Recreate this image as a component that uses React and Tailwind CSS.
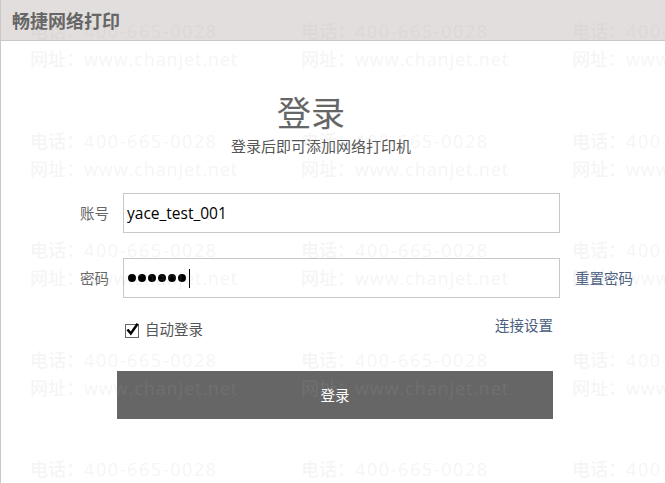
import React, { useState } from "react";

const Watermark = () => {
    const rows = [0, 1, 2, 3, 4];
    const cols = [0, 1, 2];
    return (
        <div className="col-start-1 row-start-1 pointer-events-none select-none overflow-hidden pl-[30px] pt-[17px]">
            {rows.map((r) => (
                <div key={r} className="flex h-[109.5px]">
                    {cols.map((c) => (
                        <div
                            key={c}
                            className="w-[271px] shrink-0 text-[18px] font-medium leading-[28px] whitespace-nowrap text-[rgba(175,175,175,0.15)] font-['Open_Sans','Noto_Sans_CJK_SC',sans-serif]"
                        >
                            <div>
                                电话：<span className="tracking-[1.6px]">400-665-0028</span>
                            </div>
                            <div>
                                网址：<span className="tracking-[0.9px]">www.chanjet.net</span>
                            </div>
                        </div>
                    ))}
                </div>
            ))}
        </div>
    );
};

const App = () => {
    const [account, setAccount] = useState("yace_test_001");
    const [password] = useState("123456");
    const [autoLogin, setAutoLogin] = useState(true);

    return (
        <div className="grid h-[483px] w-[665px] overflow-hidden bg-white font-['Noto_Sans_CJK_SC','Noto_Sans',sans-serif]">
            <div className="col-start-1 row-start-1 flex flex-col border-l border-[#c9c9c9]">
                <div className="flex h-[41px] shrink-0 items-center border-b border-[#c8c8c8] bg-[#e2dedd] pl-[11px]">
                    <span className="text-[18px] font-bold leading-none text-[#666]">畅捷网络打印</span>
                </div>

                <div className="flex flex-col">
                    <h1 className="mt-[54px] pl-[276px] text-[34px] leading-none text-[#666]">登录</h1>
                    <p className="mt-[9px] pl-[230px] text-[15px] leading-none text-[#555]">登录后即可添加网络打印机</p>

                    <div className="mt-[40px] flex flex-col pl-[79px]">
                        <div className="flex items-center">
                            <label className="w-[43px] text-[14.5px] text-[#666]">账号</label>
                            <input
                                value={account}
                                onChange={(e) => setAccount(e.target.value)}
                                className="h-[40px] w-[437px] border border-[#c8c8c8] px-[3px] text-[15.5px] text-black outline-none font-['Open_Sans',sans-serif]"
                            />
                        </div>

                        <div className="mt-[25px] flex items-center">
                            <label className="w-[43px] text-[14.5px] text-[#666]">密码</label>
                            <div className="flex h-[40px] w-[437px] items-center gap-[2px] border border-[#c8c8c8] pl-[4px]">
                                {password.split("").map((_, i) => (
                                    <span key={i} className="h-[8px] w-[8px] rounded-full bg-black" />
                                ))}
                                <span className="ml-[1px] h-[19px] w-px bg-black" />
                            </div>
                            <a className="ml-[15px] cursor-pointer text-[14.5px] text-[#4b5e7e]">重置密码</a>
                        </div>

                        <div className="mt-[16px] ml-[45px] flex w-[428px] items-start justify-between">
                            <label
                                className="mt-[4px] flex cursor-pointer items-center gap-[6px]"
                                onClick={() => setAutoLogin(!autoLogin)}
                            >
                                <span className="relative mt-[4px] h-[14px] w-[14px] border border-[#666] bg-white">
                                    {autoLogin && (
                                        <svg
                                            viewBox="0 0 16 16"
                                            className="absolute left-[0px] top-[-3px] h-[15px] w-[14px]"
                                        >
                                            <path
                                                d="M2.5 9 L5.5 12.5 L12.5 2.5"
                                                fill="none"
                                                stroke="#000"
                                                strokeWidth="2.8"
                                                strokeLinecap="square"
                                            />
                                        </svg>
                                    )}
                                </span>
                                <span className="text-[14.5px] text-[#555]">自动登录</span>
                            </label>
                            <a className="cursor-pointer text-[14.5px] text-[#4b5e7e]">连接设置</a>
                        </div>

                        <button className="mt-[31px] ml-[37px] h-[48px] w-[436px] bg-[#666666] text-[14.5px] text-white">
                            登录
                        </button>
                    </div>
                </div>
            </div>
            <Watermark />
        </div>
    );
};

export default App;
